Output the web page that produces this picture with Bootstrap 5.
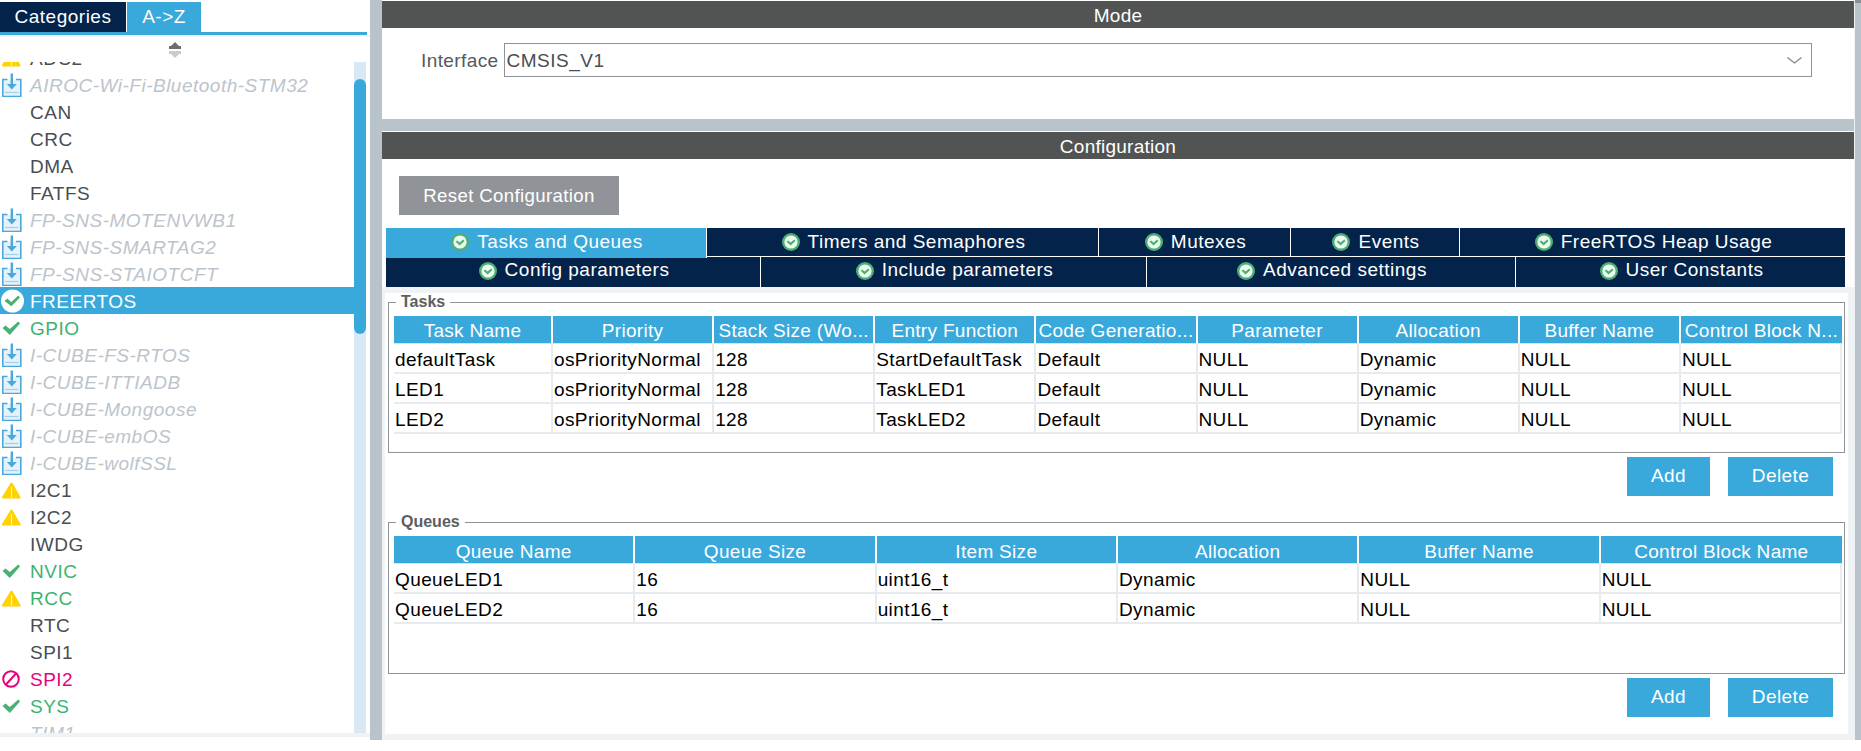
<!DOCTYPE html>
<html lang="en">
<head>
<meta charset="utf-8">
<title>FREERTOS Mode and Configuration</title>
<link href="https://cdn.jsdelivr.net/npm/bootstrap@5.3.0/dist/css/bootstrap.min.css" rel="stylesheet">
<script src="https://cdn.jsdelivr.net/npm/bootstrap@5.3.0/dist/js/bootstrap.bundle.min.js"></script>
<style>
html,body{height:100%;background:#fff;overflow:hidden}
body{font-family:"Liberation Sans",Arial,sans-serif;font-size:19px;line-height:1.2;letter-spacing:.5px}
.app-frame{height:740px;background:#b8c3ca}
.side-pane{width:370px;background:#fff}
.side-tabs{padding-top:2px;gap:1px;border-bottom:3px solid #39a9dc;margin-right:3px;box-sizing:content-box;height:30px}
.side-tab{height:30px;color:#fff;display:flex;align-items:center;justify-content:center;background:#03234b}
.side-tab.is-cat{width:126px}
.side-tab.is-az{width:74px;background:#39a9dc}
.side-strip{height:2px;background:#f0f3f5}
.sort-zone{height:25px}
.sort-zone svg{width:14px;height:16px;margin-top:5px;margin-left:-20px}
.list-zone{height:671px;background:#fff}
.list-clip{width:354px;overflow:hidden}
.comp-list{margin-top:-18px}
.comp-row{height:27px;color:#4a4e52;padding-top:4px}
.comp-row svg{width:24px;height:24px;flex:none;margin-right:6px;margin-top:-4px}
.comp-row.off{color:#bcc4cb;font-style:italic}
.comp-row.ok{color:#3cb371}
.comp-row.bad{color:#e6007e}
.comp-row.sel{background:#39a9dc;color:#fff}
.sb-track{width:12px;background:#d9e8f5}
.sb-thumb{width:12px;height:255px;margin-top:17px;background:#39a9dc;border-radius:6px}
.side-foot{height:4px;background:#f0f3f5}
.split-bar{width:12px}
.main-pane{width:1473px;border-right:1px solid #f0f3f5}
.side-scroll{width:6px;border-top:3px solid #8a8f94}
.head-bar{height:28px;background:#525453;color:#fff;border-top:1px solid #fff;display:flex;align-items:center;justify-content:center;padding-top:3px;letter-spacing:.25px}
.mode-box{height:91px;background:#fff;padding:15px 42px 0 39px}
.mode-gap{height:12px}
.mode-label{color:#55595d;margin-right:5px;margin-top:7px;letter-spacing:.4px;white-space:nowrap}
.mode-select{height:34px;border:1px solid #909498;color:#4a4e52;font-size:19px;padding:2px 30px 0 2px;line-height:1.2;border-radius:0;letter-spacing:.5px;background-image:url("data:image/svg+xml,%3csvg xmlns='http://www.w3.org/2000/svg' viewBox='0 0 15 7'%3e%3cpath d='M.5.5l7 5.5 7-5.5' fill='none' stroke='%23808488' stroke-width='1.2'/%3e%3c/svg%3e");background-size:15px 7px;background-position:right 9px center}
.cfg-top{background:#fff;padding:17px 9px 0 4px}
.reset-btn{width:220px;height:39px;margin-left:13px;margin-bottom:13px;background:#909498;border:0;border-radius:0;color:#fff;font-size:18.67px;padding:0;letter-spacing:.35px}
.tab-row{display:flex;height:28px;background:#03234b;color:#fff}
.tab-row.second{height:31px;border-top:1px solid #fff}
.cfg-tab{display:flex;align-items:center;justify-content:center;gap:8px;border-right:1px solid #fff;flex:none;padding-left:2px}
.second .cfg-tab{padding-bottom:3px}
.cfg-tab:last-child{border-right:0}
.cfg-tab svg{width:18px;height:18px}
.cfg-tab.active{background:#39a9dc;height:30px;padding-bottom:2px;position:relative;z-index:1}
.w-a{width:321px}.w-b{width:392px}.w-c{width:192px}.w-d{width:169px}.w-e{width:385px}
.w-f{width:375px}.w-g{width:386px}.w-h{width:369px}.w-i{width:329px}
.cfg-body{background:#f0f3f5;padding:6px 6px 4px 3px;flex:1}
.cfg-inner{background:#fff;padding:0 3px;height:441px}
.grp-box{border:1px solid #909498;padding:0 3px 0 5px;margin:0;min-width:0}
.grp-box.tasks{height:160px}
.grp-box.queues{height:161px;margin-top:17px}
.grp-box legend{float:none;width:auto;font-size:16px;font-weight:700;color:#5a5f63;margin:0 0 5px 2px;padding:0 5px;line-height:18px;letter-spacing:0}
.cube-tbl{table-layout:fixed;width:1448px;margin:0;border-collapse:separate;border-spacing:0;font-size:19px;letter-spacing:.4px}
.cube-tbl th{background:#39a9dc;color:#fff;font-weight:400;height:28px;padding:3px 2px 0;text-align:center;border-right:2px solid #fff;white-space:nowrap;overflow:hidden;vertical-align:middle;line-height:1;letter-spacing:.3px}
.tasks .cube-tbl th{padding-top:1px}
.tasks .cube-tbl th:first-child{width:159px}
.cube-tbl th:last-child{border-right:0}
.cube-tbl td{background:#fff;color:#000;height:30px;padding:3px 1px 0 1px;border-right:2px solid #e8ebee;border-bottom:2px solid #e8ebee;white-space:nowrap;vertical-align:middle;line-height:1}
.act-row{gap:18px;padding-right:12px;margin-top:4px}
.act-btn{height:39px;background:#39a9dc;border:0;border-radius:0;color:#fff;font-size:19px;padding:0;letter-spacing:.4px}
.act-add{width:83px}.act-del{width:105px}
</style>
</head>
<body>
<svg width="0" height="0" class="d-block" aria-hidden="true">
  <symbol id="i-dl" viewBox="0 0 24 24">
    <path d="M7.5 6.5H2.8v17h18v-17H16" fill="#e6f2fa" stroke="#4aa9dc" stroke-width="1.6"/>
    <path d="M11.8 0.5v13" stroke="#4aa9dc" stroke-width="2.4" fill="none"/>
    <path d="M6.8 11h10l-5 5.5z" fill="#4aa9dc"/>
    <path d="M5 19.5h13.5" stroke="#9fd0ee" stroke-width="1.2"/>
  </symbol>
  <symbol id="i-warn" viewBox="0 0 24 24">
    <path d="M11.5 4.5c.5 0 .9.3 1.2.9l7.8 13.6c.4.8 0 1.5-.9 1.5H2.9c-.9 0-1.3-.7-.9-1.5L10.3 5.4c.3-.6.7-.9 1.2-.9z" fill="#ffd200"/>
    <path d="M11.5 9v11" stroke="#fff3b0" stroke-width="1.2"/>
  </symbol>
  <symbol id="i-ok" viewBox="0 0 24 24">
    <path d="M2.5 12l3-2.6 4.3 3.7 8.5-7.6 1.7 2L9.8 19z" fill="#4bb073"/>
  </symbol>
  <symbol id="i-ban" viewBox="0 0 24 24">
    <circle cx="11" cy="12" r="7.8" fill="none" stroke="#e6007e" stroke-width="2"/>
    <path d="M6 17.5L16 6.5" stroke="#e6007e" stroke-width="2"/>
  </symbol>
  <symbol id="i-sel" viewBox="0 0 24 24">
    <circle cx="12.5" cy="12" r="11.5" fill="#fff"/>
    <path d="M4.5 12l2.8-2.4 4 3.4 7-6.4 1.7 2-8.7 8.6z" fill="#4bb073"/>
  </symbol>
  <symbol id="i-tab" viewBox="0 0 18 18">
    <circle cx="9" cy="9" r="9" fill="#4bb073"/>
    <circle cx="9" cy="9" r="6.6" fill="#eef9f2"/>
    <path d="M4.6 8.8l1.5-1.3 2.5 2.1 3.6-3.1 1.3 1.4-4.9 4.6z" fill="#4bb073"/>
  </symbol>
</svg>

<div class="app-frame d-flex">
  <aside class="side-pane d-flex flex-column flex-shrink-0">
    <div class="side-tabs d-flex">
      <div class="side-tab is-cat">Categories</div>
      <div class="side-tab is-az">A-&gt;Z</div>
    </div>
    <div class="side-strip"></div>
    <div class="sort-zone d-flex justify-content-center">
      <svg viewBox="0 0 14 16" aria-hidden="true"><path d="M7 0l4 4H3z" fill="#6a6e72"/><rect x="1" y="4" width="12" height="3" fill="#6a6e72"/><rect x="1" y="9" width="12" height="3" fill="#c8cccf"/><path d="M3 12h8l-4 4z" fill="#c8cccf"/></svg>
    </div>
    <div class="list-zone d-flex">
      <div class="list-clip">
        <ul class="comp-list list-unstyled mb-0">
          <li class="comp-row d-flex align-items-center"><svg><use href="#i-warn"/></svg>ADC2</li>
          <li class="comp-row off d-flex align-items-center"><svg><use href="#i-dl"/></svg>AIROC-Wi-Fi-Bluetooth-STM32</li>
          <li class="comp-row d-flex align-items-center"><svg></svg>CAN</li>
          <li class="comp-row d-flex align-items-center"><svg></svg>CRC</li>
          <li class="comp-row d-flex align-items-center"><svg></svg>DMA</li>
          <li class="comp-row d-flex align-items-center"><svg></svg>FATFS</li>
          <li class="comp-row off d-flex align-items-center"><svg><use href="#i-dl"/></svg>FP-SNS-MOTENVWB1</li>
          <li class="comp-row off d-flex align-items-center"><svg><use href="#i-dl"/></svg>FP-SNS-SMARTAG2</li>
          <li class="comp-row off d-flex align-items-center"><svg><use href="#i-dl"/></svg>FP-SNS-STAIOTCFT</li>
          <li class="comp-row sel d-flex align-items-center"><svg><use href="#i-sel"/></svg>FREERTOS</li>
          <li class="comp-row ok d-flex align-items-center"><svg><use href="#i-ok"/></svg>GPIO</li>
          <li class="comp-row off d-flex align-items-center"><svg><use href="#i-dl"/></svg>I-CUBE-FS-RTOS</li>
          <li class="comp-row off d-flex align-items-center"><svg><use href="#i-dl"/></svg>I-CUBE-ITTIADB</li>
          <li class="comp-row off d-flex align-items-center"><svg><use href="#i-dl"/></svg>I-CUBE-Mongoose</li>
          <li class="comp-row off d-flex align-items-center"><svg><use href="#i-dl"/></svg>I-CUBE-embOS</li>
          <li class="comp-row off d-flex align-items-center"><svg><use href="#i-dl"/></svg>I-CUBE-wolfSSL</li>
          <li class="comp-row d-flex align-items-center"><svg><use href="#i-warn"/></svg>I2C1</li>
          <li class="comp-row d-flex align-items-center"><svg><use href="#i-warn"/></svg>I2C2</li>
          <li class="comp-row d-flex align-items-center"><svg></svg>IWDG</li>
          <li class="comp-row ok d-flex align-items-center"><svg><use href="#i-ok"/></svg>NVIC</li>
          <li class="comp-row ok d-flex align-items-center"><svg><use href="#i-warn"/></svg>RCC</li>
          <li class="comp-row d-flex align-items-center"><svg></svg>RTC</li>
          <li class="comp-row d-flex align-items-center"><svg></svg>SPI1</li>
          <li class="comp-row bad d-flex align-items-center"><svg><use href="#i-ban"/></svg>SPI2</li>
          <li class="comp-row ok d-flex align-items-center"><svg><use href="#i-ok"/></svg>SYS</li>
          <li class="comp-row off d-flex align-items-center"><svg></svg>TIM1</li>
        </ul>
      </div>
      <div class="sb-track"><div class="sb-thumb"></div></div>
    </div>
    <div class="side-foot"></div>
  </aside>
  <div class="split-bar flex-shrink-0"></div>
  <main class="main-pane d-flex flex-column flex-shrink-0">
    <div class="head-bar">Mode</div>
    <div class="mode-box d-flex align-items-start">
      <label class="mode-label" for="iface">Interface</label>
      <select id="iface" class="form-select mode-select"><option>CMSIS_V1</option></select>
    </div>
    <div class="mode-gap"></div>
    <div class="head-bar">Configuration</div>
    <div class="cfg-top">
      <button type="button" class="btn reset-btn d-block">Reset Configuration</button>
      <div class="tab-row">
        <div class="cfg-tab w-a active"><svg><use href="#i-tab"/></svg>Tasks and Queues</div>
        <div class="cfg-tab w-b"><svg><use href="#i-tab"/></svg>Timers and Semaphores</div>
        <div class="cfg-tab w-c"><svg><use href="#i-tab"/></svg>Mutexes</div>
        <div class="cfg-tab w-d"><svg><use href="#i-tab"/></svg>Events</div>
        <div class="cfg-tab w-e"><svg><use href="#i-tab"/></svg>FreeRTOS Heap Usage</div>
      </div>
      <div class="tab-row second">
        <div class="cfg-tab w-f"><svg><use href="#i-tab"/></svg>Config parameters</div>
        <div class="cfg-tab w-g"><svg><use href="#i-tab"/></svg>Include parameters</div>
        <div class="cfg-tab w-h"><svg><use href="#i-tab"/></svg>Advanced settings</div>
        <div class="cfg-tab w-i"><svg><use href="#i-tab"/></svg>User Constants</div>
      </div>
    </div>
    <div class="cfg-body d-flex flex-column">
      <div class="cfg-inner">
        <fieldset class="grp-box tasks">
          <legend>Tasks</legend>
          <table class="table cube-tbl">
            <thead><tr><th>Task Name</th><th>Priority</th><th>Stack Size (Wo...</th><th>Entry Function</th><th>Code Generatio...</th><th>Parameter</th><th>Allocation</th><th>Buffer Name</th><th>Control Block N...</th></tr></thead>
            <tbody>
              <tr><td>defaultTask</td><td>osPriorityNormal</td><td>128</td><td>StartDefaultTask</td><td>Default</td><td>NULL</td><td>Dynamic</td><td>NULL</td><td>NULL</td></tr>
              <tr><td>LED1</td><td>osPriorityNormal</td><td>128</td><td>TaskLED1</td><td>Default</td><td>NULL</td><td>Dynamic</td><td>NULL</td><td>NULL</td></tr>
              <tr><td>LED2</td><td>osPriorityNormal</td><td>128</td><td>TaskLED2</td><td>Default</td><td>NULL</td><td>Dynamic</td><td>NULL</td><td>NULL</td></tr>
            </tbody>
          </table>
        </fieldset>
        <div class="act-row d-flex justify-content-end">
          <button type="button" class="btn act-btn act-add">Add</button>
          <button type="button" class="btn act-btn act-del">Delete</button>
        </div>
        <fieldset class="grp-box queues">
          <legend>Queues</legend>
          <table class="table cube-tbl">
            <thead><tr><th>Queue Name</th><th>Queue Size</th><th>Item Size</th><th>Allocation</th><th>Buffer Name</th><th>Control Block Name</th></tr></thead>
            <tbody>
              <tr><td>QueueLED1</td><td>16</td><td>uint16_t</td><td>Dynamic</td><td>NULL</td><td>NULL</td></tr>
              <tr><td>QueueLED2</td><td>16</td><td>uint16_t</td><td>Dynamic</td><td>NULL</td><td>NULL</td></tr>
            </tbody>
          </table>
        </fieldset>
        <div class="act-row d-flex justify-content-end">
          <button type="button" class="btn act-btn act-add">Add</button>
          <button type="button" class="btn act-btn act-del">Delete</button>
        </div>
      </div>
    </div>
  </main>
  <div class="side-scroll flex-shrink-0"></div>
</div>
</body>
</html>
